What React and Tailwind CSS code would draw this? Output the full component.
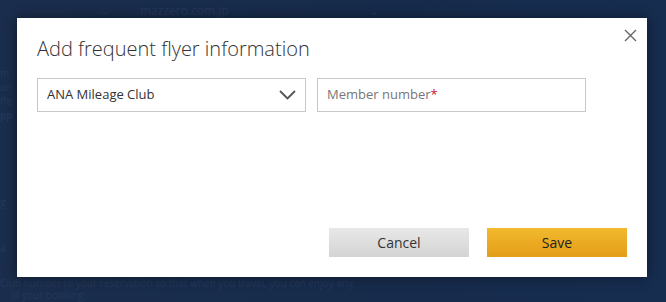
import React, { useState } from "react";

const Chevron = () => (
  <svg width="17" height="10" viewBox="0 0 17 10" fill="none">
    <path d="M1 1l7.5 7.5L16 1" stroke="#555" strokeWidth="1.8" />
  </svg>
);

const CloseIcon = () => (
  <svg width="13" height="13" viewBox="0 0 13 13" fill="none">
    <path d="M1 1l11 11M12 1L1 12" stroke="#666" strokeWidth="1.4" />
  </svg>
);

const App = () => {
  const [program, setProgram] = useState("ANA Mileage Club");
  const [member, setMember] = useState("");

  return (
    <div
      className="relative w-[666px] h-[302px] overflow-hidden bg-gradient-to-r from-[#1a2d4c] via-[#172b4b] to-[#162d50]"
      style={{ fontFamily: '"Open Sans", "Liberation Sans", sans-serif' }}
    >
      {/* page behind the overlay */}
      <div className="text-[#24385a] select-none">
        <div className="flex items-center h-[22px] pl-[100px] gap-[30px] text-[12px]">
          <span>⌄</span>
          <span>mazzero.com.jp</span>
          <span className="ml-[110px]">⌄</span>
        </div>
        <div className="mt-[44px] text-[10px] leading-[14px]">
          <div>m</div>
          <div>an</div>
          <div>ffe</div>
          <div className="font-bold">pp</div>
        </div>
        <div className="mt-[72px] text-[11px] leading-[16px]">g</div>
        <div className="mt-[30px] text-[11px] leading-[16px]">a</div>
        <div className="mt-[21px] text-[10px] leading-[12px]">
          <div>Club number to your reservation so that when you travel, you can enjoy any</div>
          <div className="pl-[10px]">of your booking.</div>
        </div>
      </div>

      {/* dialog */}
      <div className="absolute left-[17px] top-[18px] w-[630px] h-[259px] bg-white shadow-[0_0_12px_rgba(0,0,0,0.45)] flex flex-col px-5 pb-5">
        <button className="absolute right-[10px] top-[10px] flex items-center justify-center w-[14px] h-[14px]">
          <CloseIcon />
        </button>

        <h2 className="pt-[17px] text-[20px] leading-[28px] font-light text-[#333]">
          Add frequent flyer information
        </h2>

        <div className="flex gap-[11px] mt-[15px]">
          <div className="relative w-[269px] h-[34px] border border-[#c8c8c8] flex items-center">
            <select
              value={program}
              onChange={(e) => setProgram(e.target.value)}
              className="appearance-none w-full h-full pl-[9px] pr-8 text-[13px] text-[#333] bg-transparent outline-none"
            >
              <option>ANA Mileage Club</option>
              <option>United MileagePlus</option>
              <option>Lufthansa Miles &amp; More</option>
            </select>
            <span className="pointer-events-none absolute right-[9px] top-[11px]">
              <Chevron />
            </span>
          </div>

          <div className="relative w-[269px] h-[34px] border border-[#c8c8c8] flex items-center">
            <input
              value={member}
              onChange={(e) => setMember(e.target.value)}
              className="w-full h-full pl-[9px] text-[13px] text-[#333] outline-none bg-transparent"
            />
            {!member && (
              <span className="pointer-events-none absolute left-[9px] text-[13px] text-[#777]">
                Member number<span className="text-[#c8102e]">*</span>
              </span>
            )}
          </div>
        </div>

        <div className="flex-1" />

        <div className="flex justify-end gap-[18px]">
          <button className="w-[140px] h-[29px] bg-gradient-to-b from-[#e8e8e8] to-[#d4d4d4] text-[14px] text-[#333]">
            Cancel
          </button>
          <button className="w-[140px] h-[29px] bg-gradient-to-b from-[#f1b92e] to-[#e39d16] text-[14px] text-[#222]">
            Save
          </button>
        </div>
      </div>
    </div>
  );
};

export default App;
